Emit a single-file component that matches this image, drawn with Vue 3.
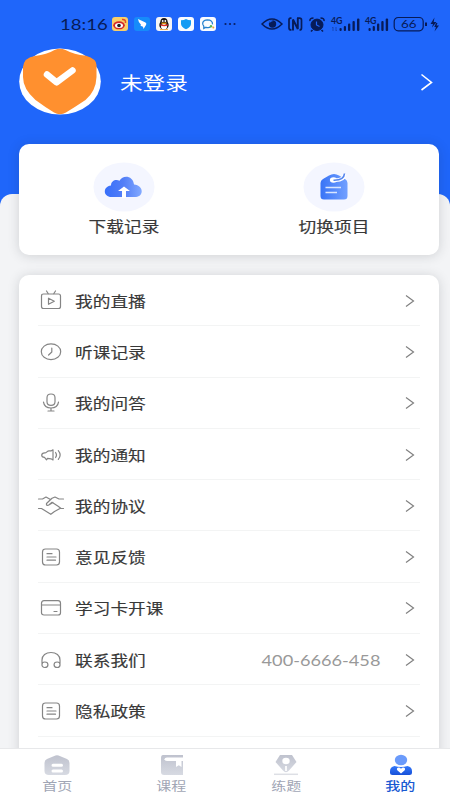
<script setup>
const rows = [
  { icon: 'tv', label: '我的直播' },
  { icon: 'clock', label: '听课记录' },
  { icon: 'mic', label: '我的问答' },
  { icon: 'horn', label: '我的通知' },
  { icon: 'hands', label: '我的协议' },
  { icon: 'note', label: '意见反馈' },
  { icon: 'card', label: '学习卡开课' },
  { icon: 'phones', label: '联系我们', value: '400-6666-458' },
  { icon: 'note', label: '隐私政策' },
]
const paths = {
  tv: 'M7.5 5H22.5Q24.5 5 24.5 7V17.5Q24.5 19.5 22.5 19.5H7.5Q5.500 19.500 5.500 17.500V7Q5.500 5 7.500 5ZM10.500 2L12.500 5M19.500 2L17.500 5M12.500 9.200V15.300L18.300 12.250Z',
  clock: 'M15 3.800C20.400 3.800 24.700 7.300 24.700 11.700S20.400 19.600 15 19.600 5.300 16.100 5.300 11.700 9.600 3.800 15 3.800M15.800 8V12L12.600 15',
  mic: 'M15 3C17.600 3 19 4.600 19 6.800V10.700C19 12.900 17.600 14.300 15 14.300S11 12.900 11 10.700V6.800C11 4.600 12.400 3 15 3M7.500 11.200C8 14.700 10.700 17 15 17S22 14.700 22.500 11.200M15 17V20M12 20H18',
  horn: 'M15 8L17 6.800V17L15 15.800L11.500 15.300L10.500 16.800L8.500 14.400C6.700 14.200 5.700 13.400 5.700 12.200C5.700 10.700 7 9.900 8.800 9.900C10.800 9.900 11 7.800 13 7.800H15M19.600 9.500Q21.400 12 19.600 14.500M22.300 7.600Q26 12 22.300 16.400',
  hands: 'M2.500 5H6.500L10 3L14.500 5.500M27.500 5H23L19 3L16 4.300L10.500 9.500Q10 12 12.800 11L16 8.300L22.500 12.500L25 14.500H27.500M2.500 14.500H5.500L14.800 20.300L18.500 17.500L24 14.500M12.800 11L17 8.500',
  note: 'M9.500 4H20.500Q23.500 4 23.500 7V17Q23.500 20 20.500 20H9.500Q6.500 20 6.500 17V7Q6.500 4 9.500 4ZM11 8.700H16M11 12H20M11 15.200H19.500',
  card: 'M8 4.700H22Q24.500 4.700 24.500 7.200V16.700Q24.500 19 22 19H8Q5.500 19 5.500 16.700V7.200Q5.500 4.700 8 4.700ZM5.500 9H24.500M18 15.500H21',
  phones: 'M6 15.500V12C6 7.500 9.800 4.500 15 4.500S24 7.500 24 12V15.500M8.800 14C13 14 13 19.500 8.800 19.500C5 19.500 5 14 8.800 14M21.200 14C25 14 25 19.500 21.200 19.500C17 19.500 17 14 21.200 14',
}
const tabs = [
  { id: 'home', label: '首页' },
  { id: 'course', label: '课程' },
  { id: 'quiz', label: '练题' },
  { id: 'me', label: '我的', active: true },
]
</script>

<template>
  <main class="screen">
    <header class="top">
      <div class="status">
        <span class="time"><span class="wide">18:16</span></span>
        <div class="apps">
          <svg width="16" height="14" viewBox="0 0 16 14"><rect width="16" height="14" rx="3" fill="#f9cf69"/><ellipse cx="7" cy="8.300" rx="5.800" ry="4" fill="#d52929"/><ellipse cx="7" cy="8.500" rx="4" ry="2.500" fill="#fff"/><circle cx="7" cy="8.500" r="1.800" fill="#222"/><path d="M10 2.500Q14 2 13.500 6" fill="none" stroke="#e34b25" stroke-width="1.500"/></svg>
          <svg width="16" height="14" viewBox="0 0 16 14"><rect width="16" height="14" rx="3" fill="#168bfa"/><path d="M4 2L11.500 5.500Q13 6.500 12 8L9.500 12L9 9.800L6.500 8.800L7 7.800Q4.500 6 4 2Z" fill="#fff"/></svg>
          <svg width="16" height="14" viewBox="0 0 16 14"><rect width="16" height="14" rx="3" fill="#f7f5f6"/><ellipse cx="8" cy="8" rx="4.700" ry="4.500" fill="#151515"/><ellipse cx="8" cy="4.800" rx="3.600" ry="3.800" fill="#151515"/><ellipse cx="8" cy="9.800" rx="3" ry="2.700" fill="#fff"/><path d="M4.500 7Q8 9 11.500 7L12 8.500Q8 10 4.500 8.500Z" fill="#e72d27"/><circle cx="6.700" cy="4" r=".9" fill="#fff"/><circle cx="9.300" cy="4" r=".9" fill="#fff"/><path d="M5.500 6H10.500L8 7ZM4 12.500H7.500M8.500 12.500H12" fill="#f6a21b" stroke="#f6a21b" stroke-width=".8"/></svg>
          <svg width="16" height="14" viewBox="0 0 16 14"><rect width="16" height="14" rx="3" fill="#fafcff"/><path d="M8 2Q10 3.300 13 3.300V7Q12.500 10.500 8 12.200Q3.500 10.500 3 7V3.300Q6 3.300 8 2Z" fill="#159cf4"/></svg>
          <svg width="16" height="14" viewBox="0 0 16 14"><rect width="16" height="14" rx="3" fill="#fafcff"/><path d="M10.500 10.200Q8.500 11 6 10.300L3.800 11.500V9.300C1.500 7 2.500 3 7.300 2.800C11 2.800 12.800 4.800 12.500 7.300" fill="none" stroke="#2682ce" stroke-width="1.300"/><circle cx="11" cy="9.300" r="1.200" fill="#55b752"/><circle cx="13.300" cy="10.400" r="1" fill="#f4a42c"/></svg>
          <svg class="dots" width="12" height="4" viewBox="0 0 12 4" fill="#0a1f63"><circle cx="1.500" cy="2" r="1.100"/><circle cx="6" cy="2" r="1.100"/><circle cx="10.500" cy="2" r="1.100"/></svg>
        </div>
        <svg class="system" width="178" height="18" viewBox="0 0 178 18" fill="none" stroke="#071b58">
          <path d="M1 9Q11-1 21 9Q11 19 1 9Z" stroke-width="1.500"/><circle cx="11.500" cy="9" r="3.700" fill="#071b58" stroke="none"/><path d="M8.500 7.500Q9.500 5.500 11.500 6" stroke="#1f66fa" stroke-width="1.200"/>
          <path d="M30.500 3.200H29.500Q28 3.200 28 5V13Q28 15 30.500 15M36 3.200H38.500Q40.500 3.200 40.500 5V13Q40.500 15 38.500 15" stroke-width="1.700"/><path d="M32 15.500V4.500L36.800 14V3" stroke-width="1.900"/>
          <ellipse cx="56" cy="9.800" rx="6" ry="5.700" fill="#071b58"/><path d="M49 6Q48.500 3 52.500 3M59.500 3Q63.500 3 63 6M51.500 15L50 16.500M60.500 15L62 16.500" stroke-width="1.600"/><path d="M55.500 6.500V10L58.500 11.500" stroke="#1f66fa" stroke-width="1.200"/>
          <g fill="#071b58" stroke="none"><rect x="78.500" y="13" width="2.200" height="3" rx="1"/><rect x="82.800" y="11" width="2.200" height="5" rx="1"/><rect x="87" y="8.500" width="2.300" height="7.500" rx="1"/><rect x="91.500" y="6" width="2.300" height="10" rx="1"/><rect x="96" y="3.500" width="2.400" height="12.500" rx="1"/><rect x="107.500" y="13" width="2.200" height="3" rx="1"/><rect x="111.700" y="11" width="2.200" height="5" rx="1"/><rect x="116" y="8.500" width="2.300" height="7.500" rx="1"/><rect x="120.300" y="6" width="2.300" height="10" rx="1"/><rect x="124.700" y="3.500" width="2.400" height="12.500" rx="1"/></g>
          <g class="net"><text x="70" y="9" textLength="11.500" lengthAdjust="spacingAndGlyphs">4G</text><text x="104" y="9" textLength="11.500" lengthAdjust="spacingAndGlyphs">4G</text></g>
          <path d="M72 12V16M71 13L72 12M75 12V16L76 15" stroke="#1747bb"/>
          <rect x="133.200" y="2.500" width="29" height="13.300" rx="4" stroke-width="1.200"/><text class="charge" x="140" y="13.400" textLength="15.500" lengthAdjust="spacingAndGlyphs">66</text><path d="M165 7.500V11" stroke-width="2"/><path d="M173.500 2.500L169.500 9H172L171 12.500L175.500 7H172.700ZM175 8L173.300 12H175L173.500 16.500L178 10.500H175.500L176.500 8Z" fill="#071b58" stroke="none"/>
        </svg>
      </div>
      <div class="profile">
        <svg class="avatar" width="82" height="67" viewBox="0 0 82 67"><ellipse cx="41" cy="33.500" rx="40.800" ry="33" fill="#fff"/><path d="M35.500 2Q41-.5 46.500 2Q55 6.500 67 7.800Q77.500 11 77.500 17V29Q77 43 66.500 52Q56 59 47 64.500Q41 68 35 64.500Q26 59 16.500 52Q4 41 4 29V19Q5 9.500 16 8Q28 6.500 35.500 2Z" fill="#ff902f"/><path d="M28 26.500L37.500 34.300L53.500 22.500" fill="none" stroke="#fff" stroke-width="6.500" stroke-linecap="round" stroke-linejoin="round"/></svg>
        <span class="name wide">未登录</span>
        <svg class="go" width="14" height="18" viewBox="0 0 14 18" fill="none" stroke="#fff" stroke-width="1.600"><path d="M1.500 1.500L11.500 9.500L1.500 17"/></svg>
      </div>
    </header>

    <div class="sheet">
      <section class="quick panel">
        <div class="action">
          <svg width="62" height="50" viewBox="0 0 62 50"><defs><linearGradient id="cloud"><stop stop-color="#376ffa"/><stop offset=".5" stop-color="#527ef7"/><stop offset="1" stop-color="#83aaff"/></linearGradient></defs><ellipse cx="31" cy="25" rx="30.500" ry="24.500" fill="#f4f6ff"/><path d="M18.500 35C10 35 9.500 24.500 18 23.500C18 19 22.500 17 26.500 18.700C30 12.500 40 13.500 41 22.500C51 23.500 51 34.500 43 35Z" fill="url(#cloud)"/><path d="M31 24.500L37 29H33V36H29V29H25Z" fill="#fff"/></svg>
          <span class="wide">下载记录</span>
        </div>
        <div class="action">
          <svg width="62" height="50" viewBox="0 0 62 50"><defs><linearGradient id="tag"><stop stop-color="#3974f6"/><stop offset="1" stop-color="#72a0ff"/></linearGradient></defs><ellipse cx="31" cy="25" rx="30.500" ry="24.500" fill="#f4f6ff"/><path d="M17.500 21Q17.500 18.500 20 17L26 13.500Q31 10.500 36 13.500L42 17Q44.500 18.500 44.500 21V34Q44.500 37.500 41 37.500H21Q17.500 37.500 17.500 34Z" fill="url(#tag)"/><path d="M32 18.200Q41 18.500 41.500 12" fill="none" stroke="#fff" stroke-width="3.400"/><ellipse cx="30.500" cy="18" rx="3.600" ry="2.700" fill="#fff"/><path d="M30.500 18.200Q41 18.500 41.500 11.500" fill="none" stroke="#5484ee" stroke-width="1.600"/><path d="M22.500 25.500H38M22.500 30.500H34" stroke="#d9e6ff" stroke-width="1.300"/></svg>
          <span class="wide">切换项目</span>
        </div>
      </section>

      <section class="menu panel">
        <div v-for="row in rows" :key="row.label" class="row">
          <svg class="glyph" width="30" height="24" viewBox="0 0 30 24"><path :d="paths[row.icon]"/></svg>
          <span class="label wide">{{ row.label }}</span>
          <span v-if="row.value" class="value wide">{{ row.value }}</span>
          <svg class="chevron" width="10" height="14" viewBox="0 0 10 14"><path d="M1 1.500L8.500 7L1 12.500"/></svg>
        </div>
      </section>
    </div>

    <nav class="tabs">
      <div v-for="tab in tabs" :key="tab.id" class="tab" :class="{ active: tab.active }">
        <svg width="28" height="24" viewBox="0 0 28 24">
          <defs><linearGradient id="silver" x1="0" y1="0" x2="0" y2="1"><stop stop-color="#bfc2ce"/><stop offset="1" stop-color="#d7dae2"/></linearGradient><linearGradient id="blue" x1="0" y1="0" x2="0" y2="1"><stop stop-color="#3479fb"/><stop offset="1" stop-color="#1750d8"/></linearGradient></defs>
          <g v-if="tab.id === 'home'"><path d="M12.500 2.500Q14 2 15.500 2.500L24 6Q26.500 7 26.500 10V18Q26.500 22 22 22H6Q1.500 22 1.500 18V10Q1.500 7 4 6Z" fill="url(#silver)"/><path d="M10 12.200H18.500M10 18H18.500" stroke="#fff" stroke-width="3" stroke-linecap="round"/></g>
          <g v-else-if="tab.id === 'course'"><path d="M5 2H25V22H6Q3 22 3 19V5Q3 2 5 2Z" fill="url(#silver)"/><path d="M25 4.500H9Q6.500 4.500 6.500 6.200T9 8H25" fill="#fff"/><path d="M18 7.500H23.500V14L20.800 12.300L18 14Z" fill="#fff"/></g>
          <g v-else-if="tab.id === 'quiz'"><path d="M8 2H20L24.500 9L17 17.500Q14 21 11 17.500L3.500 9Z" fill="url(#silver)"/><ellipse cx="14" cy="8" rx="3.700" ry="3.300" fill="#fff"/><path d="M14 13V18" stroke="#fff" stroke-width="1.700"/><path d="M2 21.300H26" stroke="#dddfe5" stroke-width="1.500"/></g>
          <g v-else><ellipse cx="14" cy="7" rx="6.200" ry="5.300" fill="#6b9bfb"/><path d="M7.500 13Q14 15 20.500 13Q25 14 25 18V20Q25 22 22.500 22H5.500Q3 22 3 20V18Q3 14 7.500 13Z" fill="url(#blue)"/><path d="M14 20.500L10.300 17.300C8.700 15.300 12 13.300 14 15.700C16 13.300 19.300 15.300 17.700 17.300Z" fill="#fff"/></g>
        </svg>
        <span class="wide">{{ tab.label }}</span>
      </div>
    </nav>
  </main>
</template>

<style>
body { margin: 0; overflow: hidden; }
</style>
<style scoped>
.screen { display: flex; flex-direction: column; width: 450px; height: 800px; overflow: hidden; background: #1f66fa; font-family: "Noto Sans CJK SC", sans-serif; color: #383838; }
svg { display: block; flex: none; }
.wide { display: inline-block; white-space: nowrap; transform: scaleX(1.22); transform-origin: left center; }
.top { flex: none; height: 194px; }
.status { display: flex; align-items: center; height: 48px; padding-left: 60px; box-sizing: border-box; }
.time { flex: none; width: 52px; font: 16px/20px Lato, sans-serif; color: #071b58; }
.time .wide { transform: scaleX(1.16); }
.apps { display: flex; align-items: center; gap: 6px; width: 149px; }
.dots { margin-left: 2px; }
.net text, .charge { fill: #071b58; stroke: none; font-family: Lato, sans-serif; }
.net text { font-size: 8.500px; font-weight: 700; }
.charge { font-size: 12.300px; }
.profile { display: flex; align-items: center; padding: 0 16px 0 19px; }
.name { margin-left: 19px; font-size: 18.500px; line-height: 28px; color: #fff; }
.go { margin-left: auto; }
.sheet { display: flex; flex-direction: column; gap: 20px; flex: 1; min-height: 0; padding: 0 11px 0 19px; border-radius: 12px 12px 0 0; background: #f3f4f6; }
.panel { background: #fff; border-radius: 10px; box-shadow: 0 1px 12px rgba(35, 42, 48, .17); }
.quick { display: grid; grid-template-columns: 1fr 1fr; flex: none; height: 111px; margin-top: -50px; }
.action { display: flex; flex-direction: column; align-items: center; padding-top: 18px; font-size: 14.500px; line-height: 22px; -webkit-text-stroke: .15px currentColor; }
.action .wide { margin-top: 3px; transform-origin: center; }
.menu { flex: none; height: 490px; padding: 0 19px; }
.row { display: flex; align-items: center; height: 51.300px; box-sizing: border-box; border-bottom: 1px solid #f3f4f4; padding: 1px 5px 0 0; }
.glyph { margin-left: -2px; fill: none; stroke: #858585; stroke-width: 1.200; stroke-linecap: round; stroke-linejoin: round; }
.label { margin-left: 9px; font-size: 14.500px; line-height: 22px; -webkit-text-stroke: .15px currentColor; }
.value { margin-left: auto; margin-right: 25px; font: 14.900px/22px Lato, sans-serif; color: #999; transform-origin: right center; }
.chevron { margin-left: auto; fill: none; stroke: #808080; stroke-width: 1.200; }
.value + .chevron { margin-left: 0; }
.tabs { position: relative; display: grid; grid-template-columns: repeat(4, 114.500px); flex: none; height: 52px; box-sizing: border-box; border-top: 1px solid #e7e8ea; background: #fff; }
.tab { display: flex; flex-direction: column; align-items: center; padding-top: 4px; font-size: 12.300px; line-height: 18px; color: #a1a6b5; }
.tab .wide { transform-origin: center; }
.tab.active { color: #1959d2; font-weight: 500; }
</style>
